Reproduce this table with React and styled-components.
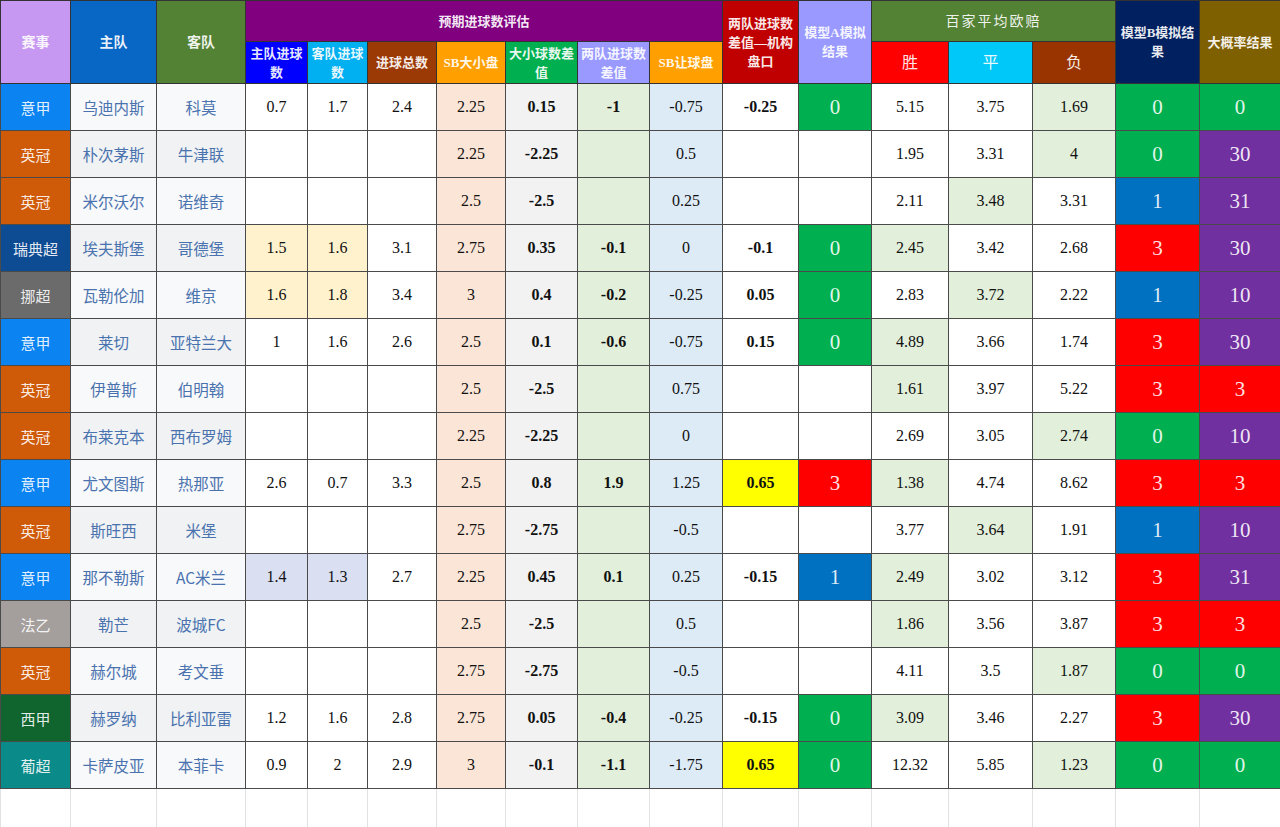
import React from "react"
import styled, { createGlobalStyle } from "styled-components"

const GlobalStyle = createGlobalStyle`
  body {
    margin: 0;
    background: #ffffff;
    overflow: hidden;
  }
`

const widths = [70, 86, 89, 62, 60, 69, 69, 72, 72, 73, 76, 73, 77, 84, 83, 84, 81]

const leagueColors = {
  "意甲": "#0b84f2",
  "英冠": "#cf5a08",
  "瑞典超": "#0d4b93",
  "挪超": "#6b6b6b",
  "法乙": "#a49e9c",
  "西甲": "#10652f",
  "葡超": "#0a8a88",
}

const resultColors = {
  "0": "#00b050",
  "1": "#0070c0",
  "3": "#ff0000",
  "30": "#7030a0",
  "31": "#7030a0",
  "10": "#7030a0",
}

// league, home, away, hg, ag, total, sbOU, ouDiff, goalDiff, sbHcp, instDiff, modelA, odds, low, modelB, big, hint
const rows = [
  ["意甲", "乌迪内斯", "科莫", "0.7", "1.7", "2.4", "2.25", "0.15", "-1", "-0.75", "-0.25", "0", ["5.15", "3.75", "1.69"], 2, "0", "0"],
  ["英冠", "朴次茅斯", "牛津联", "", "", "", "2.25", "-2.25", "", "0.5", "", "", ["1.95", "3.31", "4"], 2, "0", "30"],
  ["英冠", "米尔沃尔", "诺维奇", "", "", "", "2.5", "-2.5", "", "0.25", "", "", ["2.11", "3.48", "3.31"], 1, "1", "31"],
  ["瑞典超", "埃夫斯堡", "哥德堡", "1.5", "1.6", "3.1", "2.75", "0.35", "-0.1", "0", "-0.1", "0", ["2.45", "3.42", "2.68"], 0, "3", "30", "yellow"],
  ["挪超", "瓦勒伦加", "维京", "1.6", "1.8", "3.4", "3", "0.4", "-0.2", "-0.25", "0.05", "0", ["2.83", "3.72", "2.22"], 1, "1", "10", "yellow"],
  ["意甲", "莱切", "亚特兰大", "1", "1.6", "2.6", "2.5", "0.1", "-0.6", "-0.75", "0.15", "0", ["4.89", "3.66", "1.74"], 0, "3", "30"],
  ["英冠", "伊普斯", "伯明翰", "", "", "", "2.5", "-2.5", "", "0.75", "", "", ["1.61", "3.97", "5.22"], 0, "3", "3"],
  ["英冠", "布莱克本", "西布罗姆", "", "", "", "2.25", "-2.25", "", "0", "", "", ["2.69", "3.05", "2.74"], 2, "0", "10"],
  ["意甲", "尤文图斯", "热那亚", "2.6", "0.7", "3.3", "2.5", "0.8", "1.9", "1.25", "0.65", "3", ["1.38", "4.74", "8.62"], 0, "3", "3"],
  ["英冠", "斯旺西", "米堡", "", "", "", "2.75", "-2.75", "", "-0.5", "", "", ["3.77", "3.64", "1.91"], 1, "1", "10"],
  ["意甲", "那不勒斯", "AC米兰", "1.4", "1.3", "2.7", "2.25", "0.45", "0.1", "0.25", "-0.15", "1", ["2.49", "3.02", "3.12"], 0, "3", "31", "lavender"],
  ["法乙", "勒芒", "波城FC", "", "", "", "2.5", "-2.5", "", "0.5", "", "", ["1.86", "3.56", "3.87"], 0, "3", "3"],
  ["英冠", "赫尔城", "考文垂", "", "", "", "2.75", "-2.75", "", "-0.5", "", "", ["4.11", "3.5", "1.87"], 2, "0", "0"],
  ["西甲", "赫罗纳", "比利亚雷", "1.2", "1.6", "2.8", "2.75", "0.05", "-0.4", "-0.25", "-0.15", "0", ["3.09", "3.46", "2.27"], 0, "3", "30"],
  ["葡超", "卡萨皮亚", "本菲卡", "0.9", "2", "2.9", "3", "-0.1", "-1.1", "-1.75", "0.65", "0", ["12.32", "5.85", "1.23"], 2, "0", "0"],
]

const hintColors = { yellow: "#fff2cc", lavender: "#dae0f2" }

const App = () => {
  return (
    <>
      <GlobalStyle />
      <Sheet>
        <colgroup>
          {widths.map((w, i) => <col key={i} style={{ width: w }} />)}
        </colgroup>
        <thead>
          <TopRow>
            <Head rowSpan={2} $bg="#c698f2" $size={14}>赛事</Head>
            <Head rowSpan={2} $bg="#0866c4" $size={14}>主队</Head>
            <Head rowSpan={2} $bg="#548235" $size={14}>客队</Head>
            <Head colSpan={7} $bg="#800080">预期进球数评估</Head>
            <Head rowSpan={2} $bg="#c00000">两队进球数差值—机构盘口</Head>
            <Head rowSpan={2} $bg="#9999ff">模型A模拟结果</Head>
            <Head colSpan={3} $bg="#548235" $size={14} $spacing={2} $light>百家平均欧赔</Head>
            <Head rowSpan={2} $bg="#002060">模型B模拟结果</Head>
            <Head rowSpan={2} $bg="#7f6000">大概率结果</Head>
          </TopRow>
          <SubRow>
            <Head $bg="#0000ff">主队进球数</Head>
            <Head $bg="#00b0f0">客队进球数</Head>
            <Head $bg="#9c3a06">进球总数</Head>
            <Head $bg="#ffa000">SB大小盘</Head>
            <Head $bg="#00b050">大小球数差值</Head>
            <Head $bg="#9999ff">两队进球数差值</Head>
            <Head $bg="#ffa000">SB让球盘</Head>
            <Head $bg="#ff0000" $size={16} $light>胜</Head>
            <Head $bg="#00c8f8" $size={16} $light>平</Head>
            <Head $bg="#993300" $size={16} $light>负</Head>
          </SubRow>
        </thead>
        <tbody>
          {rows.map((r, i) => {
            const [league, home, away, hg, ag, total, ou, ouDiff, gd, hcp, inst, modelA, odds, low, modelB, big, hint] = r
            const stripe = i % 2 === 0 ? "#f8f9fb" : "#f0f2f4"
            return (
              <DataRow key={i}>
                <League $bg={leagueColors[league]}>{league}</League>
                <Team $bg={stripe}>{home}</Team>
                <Team $bg={stripe}>{away}</Team>
                <Num $bg={hint ? hintColors[hint] : "#ffffff"}>{hg}</Num>
                <Num $bg={hint ? hintColors[hint] : "#ffffff"}>{ag}</Num>
                <Num>{total}</Num>
                <Num $bg="#fbe5d6">{ou}</Num>
                <Num $bg="#f2f2f2" $bold>{ouDiff}</Num>
                <Num $bg="#e2efda" $bold>{gd}</Num>
                <Num $bg="#ddebf7">{hcp}</Num>
                <Num $bg={inst === "0.65" ? "#ffff00" : "#ffffff"} $bold>{inst}</Num>
                <Result $bg={modelA ? resultColors[modelA] : "#ffffff"}>{modelA}</Result>
                {odds.map((o, j) => (
                  <Num key={j} $bg={j === low ? "#e2efda" : "#ffffff"}>{o}</Num>
                ))}
                <Result $bg={resultColors[modelB]}>{modelB}</Result>
                <Result $bg={big === "3" ? "#ff0000" : resultColors[big]}>{big}</Result>
              </DataRow>
            )
          })}
          <BlankRow>
            {widths.map((w, i) => <Blank key={i} />)}
          </BlankRow>
        </tbody>
      </Sheet>
    </>
  )
}

export default App

const Sheet = styled.table`
  width: 1280px;
  border-collapse: collapse;
  table-layout: fixed;
  font-family: "Liberation Serif", "Noto Sans CJK SC", serif;
`

const TopRow = styled.tr`
  height: 41px;
`

const SubRow = styled.tr`
  height: 42px;
`

const DataRow = styled.tr`
  height: 47px;
`

const BlankRow = styled.tr`
  height: 40px;
`

const Head = styled.th`
  background: ${(p) => p.$bg};
  color: rgba(255, 255, 255, 0.92);
  border: 1px solid #333333;
  padding: 0 3px;
  font-family: "Liberation Serif", "Noto Sans CJK SC", serif;
  font-size: ${(p) => p.$size || 13}px;
  font-weight: ${(p) => (p.$light ? 400 : 700)};
  line-height: 19px;
  letter-spacing: ${(p) => p.$spacing || 0}px;
  text-align: center;
  vertical-align: middle;
  word-break: break-all;
`

const Cell = styled.td`
  border: 1px solid #4a4a4a;
  padding: 0;
  text-align: center;
  vertical-align: middle;
  white-space: nowrap;
`

const League = styled(Cell)`
  background: ${(p) => p.$bg};
  color: rgba(255, 255, 255, 0.9);
  font-family: "Noto Sans CJK SC", "Liberation Sans", sans-serif;
  font-size: 15px;
`

const Team = styled(Cell)`
  background: ${(p) => p.$bg};
  color: #4a72ae;
  font-family: "Noto Sans CJK SC", "Liberation Sans", sans-serif;
  font-size: 15.5px;
`

const Num = styled(Cell)`
  background: ${(p) => p.$bg || "#ffffff"};
  color: #111111;
  font-family: "Liberation Serif", "Times New Roman", serif;
  font-size: 16px;
  font-weight: ${(p) => (p.$bold ? 700 : 400)};
`

const Result = styled(Cell)`
  background: ${(p) => p.$bg};
  color: rgba(255, 255, 255, 0.9);
  font-family: "Liberation Serif", "Times New Roman", serif;
  font-size: 21px;
`

const Blank = styled.td`
  border: 1px solid #e2e2e2;
  background: #ffffff;
`
